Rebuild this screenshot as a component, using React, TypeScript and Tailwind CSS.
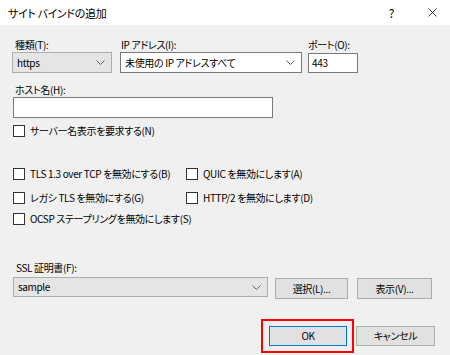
import { X } from "lucide-react";

const font = "font-['Noto_Sans_CJK_JP','Noto_Sans',sans-serif] [font-feature-settings:'palt']";

function Chevron() {
  return (
    <svg width="9" height="5" viewBox="0 0 9 5" className="shrink-0">
      <path d="M0.5 0.5 L4.5 4.5 L8.5 0.5" fill="none" stroke="#606060" strokeWidth="1" />
    </svg>
  );
}

function Select({ value, width, white }: { value: string; width: string; white?: boolean }) {
  return (
    <div
      className={`${width} h-[21px] flex items-center justify-between pl-[4px] pr-[6px] border ${
        white ? "bg-white border-[#7a7a7a]" : "bg-[#e5e5e5] border-[#adadad]"
      }`}
    >
      <span>{value}</span>
      <Chevron />
    </div>
  );
}

function Check({ label }: { label: string }) {
  return (
    <div className="h-[14px] flex items-center gap-[5px] whitespace-nowrap">
      <span className="w-[12px] h-[12px] border border-[#333] bg-white shrink-0" />
      <span>{label}</span>
    </div>
  );
}

function Button({ label, width }: { label: string; width: string }) {
  return (
    <div className={`${width} h-[21px] flex items-center justify-center bg-[#e1e1e1] border border-[#adadad]`}>
      {label}
    </div>
  );
}

export default function App() {
  return (
    <div
      className={`w-[450px] h-[355px] bg-[#f0f0f0] text-[10px] tracking-[-0.35px] leading-[14px] text-black ${font} overflow-hidden`}
    >
      {/* Title bar */}
      <div className="h-[25px] bg-white flex items-center pl-[8px] pr-[10px]">
        <span className="text-[11px]">サイト バインドの追加</span>
        <span className="ml-auto text-[12px] mr-[31px]">?</span>
        <X size={15} strokeWidth={1.2} />
      </div>

      <div className="pl-[12px]">
        {/* Type / IP / Port */}
        <div className="flex mt-[13px]">
          <div className="w-[100px]">
            <div className="pl-[3px] h-[14px]">種類(T):</div>
            <Select value="https" width="w-[100px]" />
          </div>
          <div className="w-[182px] ml-[8px]">
            <div className="pl-[1px] h-[14px]">IP アドレス(I):</div>
            <Select value="未使用の IP アドレスすべて" width="w-[182px]" white />
          </div>
          <div className="w-[50px] ml-[6px]">
            <div className="h-[14px]">ポート(O):</div>
            <div className="w-[50px] h-[20px] mt-[1px] bg-white border border-[#7a7a7a] flex items-center pl-[3px]">443</div>
          </div>
        </div>

        {/* Host name */}
        <div className="mt-[10px] pl-[3px] h-[14px]">ホスト名(H):</div>
        <div className="ml-[1px] w-[260px] h-[21px] bg-white border border-[#7a7a7a]" />
        <div className="mt-[6px] pl-[1px]">
          <Check label="サーバー名表示を要求する(N)" />
        </div>

        {/* Options */}
        <div className="mt-[29px] pl-[1px] grid grid-cols-[173px_1fr]">
          <Check label="TLS 1.3 over TCP を無効にする(B)" />
          <Check label="QUIC を無効にします(A)" />
          <div className="mt-[10px]">
            <Check label="レガシ TLS を無効にする(G)" />
          </div>
          <div className="mt-[10px]">
            <Check label="HTTP/2 を無効にします(D)" />
          </div>
          <div className="mt-[7px] col-span-2">
            <Check label="OCSP ステープリングを無効にします(S)" />
          </div>
        </div>

        {/* SSL cert */}
        <div className="mt-[35px] pl-[4px] h-[14px]">SSL 証明書(F):</div>
        <div className="flex items-start mt-[2px] pl-[1px]">
          <div className="w-[255px] h-[20px] flex items-center justify-between pl-[4px] pr-[6px] border bg-[#e5e5e5] border-[#adadad]">
            <span>sample</span>
            <Chevron />
          </div>
          <div className="ml-[7px] mt-[1px]">
            <Button label="選択(L)..." width="w-[73px]" />
          </div>
          <div className="ml-[9px] mt-[1px]">
            <Button label="表示(V)..." width="w-[75px]" />
          </div>
        </div>

        {/* OK / Cancel */}
        <div className="flex items-center mt-[20px] ml-[249px]">
          <div className="border-2 border-[#ff0000] pt-[5px] pb-[5px] pl-[6px] pr-[5px]">
            <div className="w-[78px] h-[20px] flex items-center justify-center bg-[#e1e1e1] border border-[#0078d7]">
              OK
            </div>
          </div>
          <div className="ml-[2px]">
            <div className="w-[79px] h-[20px] flex items-center justify-center bg-[#e1e1e1] border border-[#adadad]">
              キャンセル
            </div>
          </div>
        </div>
      </div>
    </div>
  );
}
